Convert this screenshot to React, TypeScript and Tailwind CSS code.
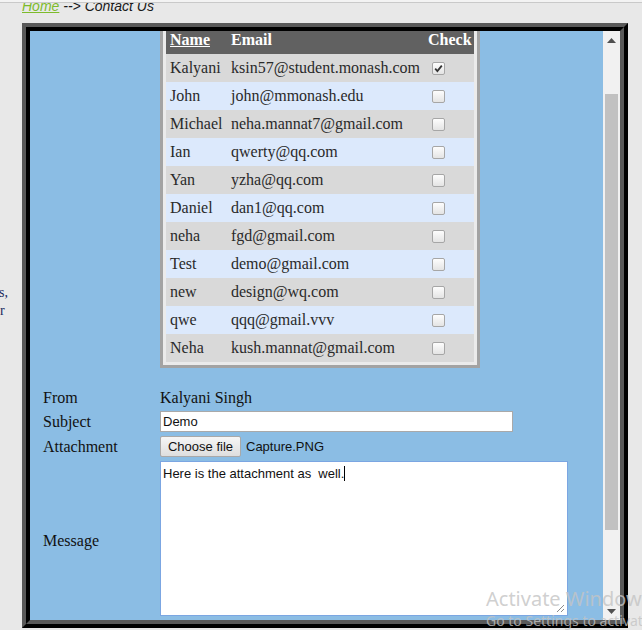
import React from "react";

interface Contact {
  name: string;
  email: string;
  checked?: boolean;
}

const contacts: Contact[] = [
  { name: "Kalyani", email: "ksin57@student.monash.com", checked: true },
  { name: "John", email: "john@mmonash.edu" },
  { name: "Michael", email: "neha.mannat7@gmail.com" },
  { name: "Ian", email: "qwerty@qq.com" },
  { name: "Yan", email: "yzha@qq.com" },
  { name: "Daniel", email: "dan1@qq.com" },
  { name: "neha", email: "fgd@gmail.com" },
  { name: "Test", email: "demo@gmail.com" },
  { name: "new", email: "design@wq.com" },
  { name: "qwe", email: "qqq@gmail.vvv" },
  { name: "Neha", email: "kush.mannat@gmail.com" },
];

const serif = "font-['Liberation_Serif','Times_New_Roman',serif]";
const sans = "font-['Liberation_Sans',Arial,sans-serif]";

const Checkbox = ({ checked }: { checked?: boolean }) => (
  <span className="ml-[4px] flex h-[13px] w-[13px] items-center justify-center rounded-[2px] border border-[#a6a6a6] bg-gradient-to-b from-[#fdfdfd] to-[#e4e4e4]">
    {checked && (
      <svg width="9" height="9" viewBox="0 0 9 9">
        <path d="M1.2 4.6 L3.4 7 L7.8 1.6" fill="none" stroke="#333" strokeWidth="1.8" />
      </svg>
    )}
  </span>
);

export default function App() {
  return (
    <div className={`relative h-[630px] w-[642px] overflow-hidden bg-[#e8e8e8] ${sans}`}>
      {/* top strip */}
      <div className="h-[3px] border-b border-[#c9c9c9] bg-[#f3f3f3]" />

      {/* Breadcrumb */}
      <div className="h-[20px] overflow-hidden pl-[22px]">
        <div className="-mt-[5px] text-[14px] leading-[16px] italic text-[#1a1a1a]">
          <span className="text-[#7dbb2c] underline">Home</span> --&gt; Contact Us
        </div>
      </div>

      <div className="flex">
        {/* cut off sidebar text */}
        <div className={`w-[22px] overflow-hidden pt-[261px] text-[14px] leading-[18px] text-[#1a2a5e] ${serif}`}>
          <div className="-ml-[1px]">s,</div>
          <div>r</div>
        </div>

        {/* Frame */}
        <div className="w-[606px] border-4 border-t-[#595959] border-l-[#595959] border-r-black border-b-black">
          <div className="flex h-[597px] border-4 border-t-black border-l-black border-r-[#595959] border-b-[#595959]">
            <div className="flex-1 overflow-hidden bg-[#8bbde4]">
              <div className="-mt-[11px]">
                {/* Contacts table */}
                <div className="ml-[130px] w-[320px] border-[3px] border-[#a3a3a3] bg-[#ebebeb] p-[3px]">
                  <table className={`w-full table-fixed border-collapse text-[16px] ${serif}`}>
                    <colgroup>
                      <col className="w-[61px]" />
                      <col className="w-[197px]" />
                      <col />
                    </colgroup>
                    <thead>
                      <tr className="h-[28px] bg-[#616161] text-left font-bold text-white">
                        <th className="p-0 pl-[4px] font-bold">
                          <span className="underline">Name</span>
                        </th>
                        <th className="p-0 pl-[4px] font-bold">Email</th>
                        <th className="p-0 pl-[4px] font-bold">Check</th>
                      </tr>
                    </thead>
                    <tbody>
                      {contacts.map((c, i) => (
                        <tr
                          key={i}
                          className={`h-[28px] text-[#2a2a2a] ${i % 2 === 0 ? "bg-[#d9d9d9]" : "bg-[#dce9fc]"}`}
                        >
                          <td className="p-0 pl-[4px] whitespace-nowrap">{c.name}</td>
                          <td className="p-0 pl-[4px] whitespace-nowrap">{c.email}</td>
                          <td className="p-0 pl-[4px]">
                            <Checkbox checked={c.checked} />
                          </td>
                        </tr>
                      ))}
                    </tbody>
                  </table>
                </div>

                {/* Mail form */}
                <div className={`mt-[20px] grid grid-cols-[117px_1fr] items-center gap-y-[4px] pl-[13px] text-[16px] leading-[18px] text-[#111] ${serif}`}>
                  <div className="flex h-[19px] items-center">From</div>
                  <div className="flex h-[19px] items-center">Kalyani Singh</div>

                  <div>Subject</div>
                  <div className={`flex h-[21px] w-[353px] items-center border border-[#a9a9a9] bg-white pl-[2px] text-[13px] ${sans}`}>
                    Demo
                  </div>

                  <div>Attachment</div>
                  <div className={`flex items-center text-[13px] ${sans}`}>
                    <span className="flex h-[21px] w-[81px] items-center justify-center rounded-[2px] border border-[#a9a9a9] bg-gradient-to-b from-[#f6f6f6] to-[#dedede]">
                      Choose file
                    </span>
                    <span className="ml-[5px]">Capture.PNG</span>
                  </div>

                  <div className="pt-[4px]">Message</div>
                  <div className={`relative h-[155px] w-[408px] border border-[#7ba6e2] bg-white px-[2px] pt-[1px] text-[13px] leading-[16px] whitespace-pre ${sans}`}>
                    Here is the attachment as  well.
                    <span className="inline-block h-[15px] w-px translate-y-[3px] bg-black" />
                    <svg className="absolute right-[2px] bottom-[2px]" width="9" height="9" viewBox="0 0 9 9">
                      <path d="M1 8 L8 1 M5 8 L8 5" stroke="#8a8a8a" strokeWidth="1" />
                    </svg>
                  </div>
                </div>
              </div>
            </div>

            {/* Scrollbar */}
            <div className="flex w-[17px] flex-col items-center bg-[#f1f1f1]">
              <svg className="mt-[7px]" width="9" height="5" viewBox="0 0 9 5">
                <path d="M0 5 L4.5 0 L9 5 Z" fill="#505050" />
              </svg>
              <div className="mt-[51px] h-[436px] w-[13px] bg-[#c1c1c1]" />
              <div className="flex-1" />
              <svg className="mb-[6px]" width="9" height="5" viewBox="0 0 9 5">
                <path d="M0 0 L9 0 L4.5 5 Z" fill="#505050" />
              </svg>
            </div>
          </div>
        </div>
      </div>

      {/* Windows watermark */}
      <div className="pointer-events-none absolute top-[586px] left-[486px] font-['Noto_Sans','Open_Sans',sans-serif] whitespace-nowrap text-[#c4c4c4]/80">
        <div className="text-[20px] leading-[26px]">Activate Windows</div>
        <div className="text-[14px] leading-[18px]">Go to Settings to activate Windows.</div>
      </div>
    </div>
  );
}
